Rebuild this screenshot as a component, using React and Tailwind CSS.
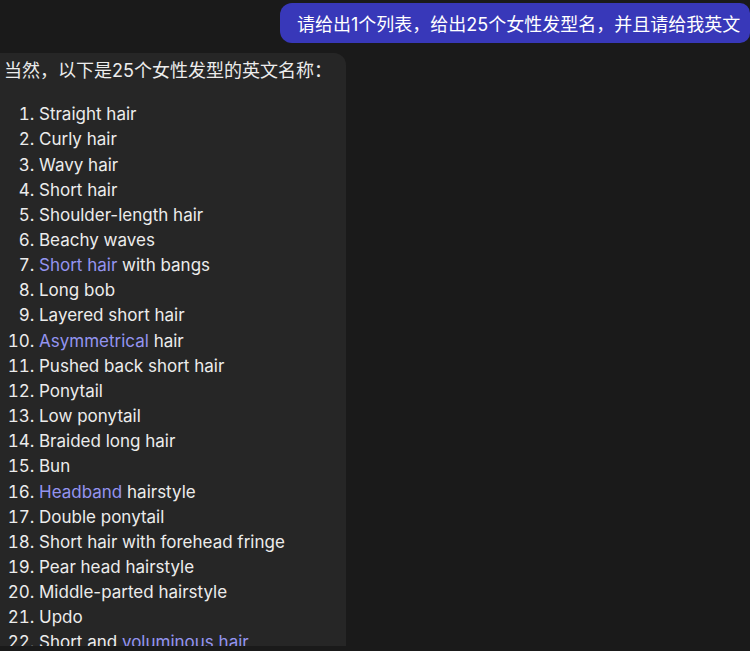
import React from "react";

const items = [
  ["Straight hair"],
  ["Curly hair"],
  ["Wavy hair"],
  ["Short hair"],
  ["Shoulder-length hair"],
  ["Beachy waves"],
  [{ l: "Short hair" }, " with bangs"],
  ["Long bob"],
  ["Layered short hair"],
  [{ l: "Asymmetrical" }, " hair"],
  ["Pushed back short hair"],
  ["Ponytail"],
  ["Low ponytail"],
  ["Braided long hair"],
  ["Bun"],
  [{ l: "Headband" }, " hairstyle"],
  ["Double ponytail"],
  ["Short hair with forehead fringe"],
  ["Pear head hairstyle"],
  ["Middle-parted hairstyle"],
  ["Updo"],
  ["Short and ", { l: "voluminous hair" }],
  ["Side-swept bangs"],
  ["French braid"],
  ["Pixie cut"],
];

export default function App() {
  return (
    <div
      className="w-[750px] h-[651px] overflow-hidden bg-[#1a1a1a] text-[#ececec]"
      style={{ fontFamily: 'Inter, "Noto Sans CJK SC", sans-serif' }}
    >
      <div className="flex justify-end pt-[3px]">
        <div className="h-[40px] w-[470px] flex items-center pl-[17px] pt-[2px] rounded-l-[12px] rounded-r-[10px] bg-[#3838b9] text-white text-[18px] whitespace-nowrap">
          请给出1个列表，给出25个女性发型名，并且请给我英文
        </div>
      </div>
      <div className="mt-[10px] w-[346px] h-[593px] overflow-hidden bg-[#262626] rounded-tr-[12px] pl-[4px] pt-[5px] text-[17px] leading-[25.2px]">
        <p className="text-[18px]">当然，以下是25个女性发型的英文名称：</p>
        <ol className="list-decimal pl-[35px] mt-[19px] marker:text-[#ececec]">
          {items.map((parts, i) => (
            <li key={i} className="whitespace-nowrap leading-[25.15px]">
              {parts.map((p, j) =>
                typeof p === "string" ? (
                  <span key={j}>{p}</span>
                ) : (
                  <span key={j} className="text-[#9494f0]">
                    {p.l}
                  </span>
                )
              )}
            </li>
          ))}
        </ol>
      </div>
    </div>
  );
}
